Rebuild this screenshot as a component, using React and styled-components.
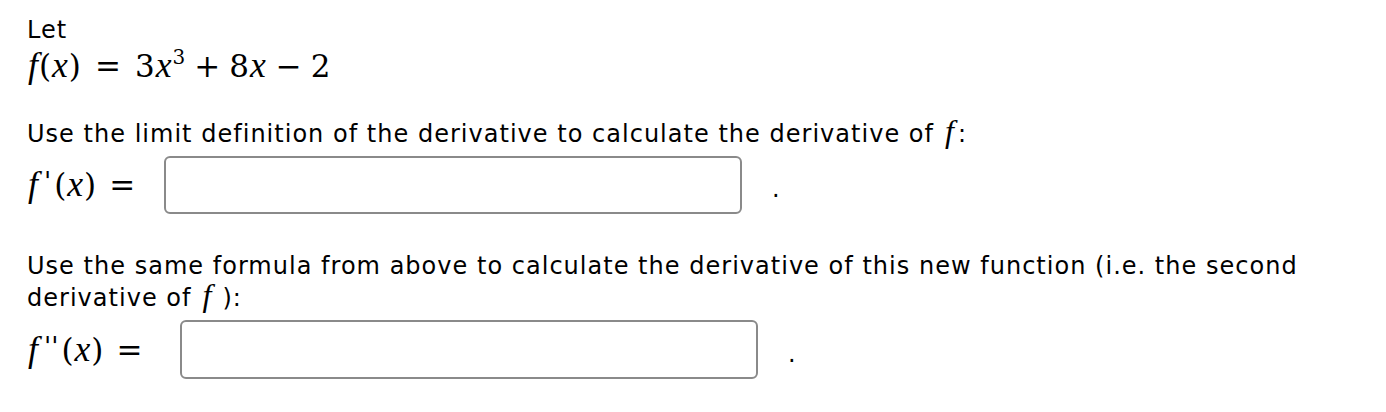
import React from 'react';
import styled, { createGlobalStyle } from 'styled-components';

const Global = createGlobalStyle`
  html, body {
    margin: 0;
    background: #fff;
  }
  body {
    font-family: "DejaVu Sans", sans-serif;
    color: #000;
  }
`;

const Page = styled.div`
  padding: 14px 27px 0 27px;
  font-size: 24px;
  line-height: 32px;
  letter-spacing: 1.02px;
`;

const Para = styled.div`
  margin-top: ${({ top }) => top || 0}px;
`;

const MathLine = styled.div`
  display: flex;
  align-items: center;
  margin-top: ${({ top }) => top || 0}px;
  height: ${({ h }) => h || 40}px;
`;

const M = styled.span`
  font-family: "DejaVu Serif", "Liberation Serif", serif;
  font-size: ${({ size }) => size || 31}px;
  line-height: 1;
  letter-spacing: 0;
  white-space: nowrap;
  margin: 0 ${({ right }) => right || 0}px 0 ${({ left }) => left || 0}px;
`;

const InlineM = styled(M)`
  line-height: 0;
`;

const Label = styled(M)`
  width: ${({ w }) => w}px;
  flex: none;
`;

const I = styled.i`
  font-family: "Liberation Serif", serif;
  font-style: italic;
  font-size: 1.15em;
  margin: 0 1px;
`;

const Prime = styled.span`
  font-family: "DejaVu Serif", serif;
  font-size: 0.85em;
  vertical-align: 6px;
  line-height: 0;
  margin: 0 3px 0 5px;
`;

const Op = styled.span`
  margin: 0 ${({ gap }) => (gap == null ? 12 : gap)}px;
`;

const Sup = styled.sup`
  font-size: 20px;
  vertical-align: 13px;
  line-height: 0;
`;

const AnswerBox = styled.div`
  width: ${({ w }) => w}px;
  height: ${({ h }) => h}px;
  box-sizing: border-box;
  border: 2px solid #8a8a8a;
  border-radius: 6px;
  background: #fff;
`;

const Dot = styled.span`
  font-size: 24px;
  margin-left: 30px;
  position: relative;
  top: 4px;
`;

export default function App() {
  return (
    <>
      <Global />
      <Page>
        <Para>Let</Para>
        <MathLine top={0} h={40}>
          <M>
            <I>f</I>(<I>x</I>)<Op gap={14}>=</Op>3<I>x</I><Sup>3</Sup>
            <Op gap={9}>+</Op>8<I>x</I><Op gap={9}>−</Op>2
          </M>
        </MathLine>

        <Para top={32}>
          Use the limit definition of the derivative to calculate the derivative of<InlineM size={28} left={10} right={3}><I>f</I></InlineM>:
        </Para>
        <MathLine top={6} h={58}>
          <Label w={137}>
            <I>f</I><Prime>'</Prime>(<I>x</I>)<Op gap={13}>=</Op>
          </Label>
          <AnswerBox w={578} h={58} />
          <Dot>.</Dot>
        </MathLine>

        <Para top={36}>
          Use the same formula from above to calculate the derivative of this new function (i.e. the second
          <br />
          derivative of<InlineM size={28} left={10} right={10}><I>f</I></InlineM>):
        </Para>
        <MathLine top={6} h={59}>
          <Label w={153}>
            <I>f</I><Prime>''</Prime>(<I>x</I>)<Op gap={13}>=</Op>
          </Label>
          <AnswerBox w={578} h={59} />
          <Dot>.</Dot>
        </MathLine>
      </Page>
    </>
  );
}
